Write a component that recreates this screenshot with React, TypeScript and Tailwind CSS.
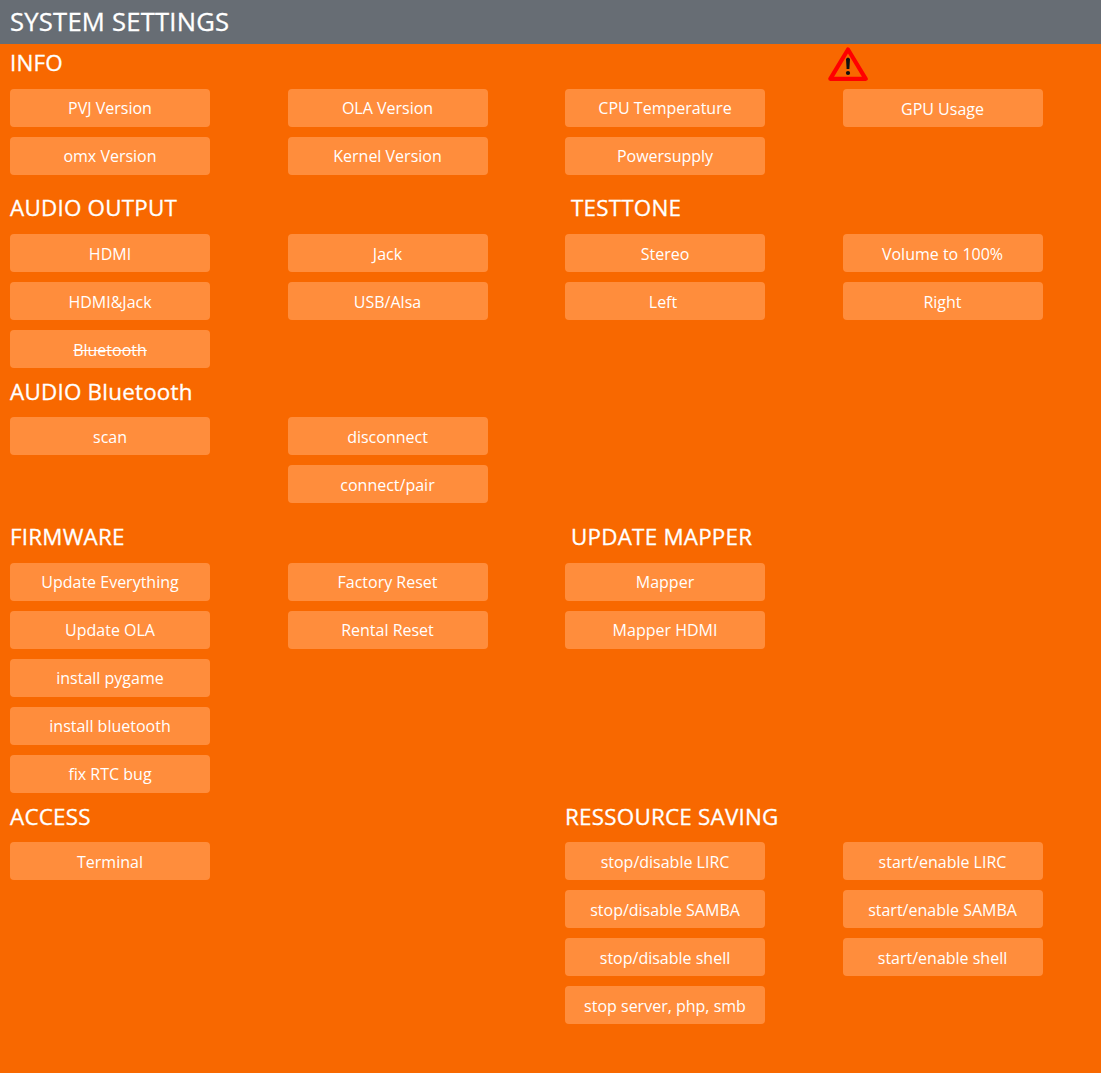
import React from "react";

type Item = string | null;

function Btn({ label, low }: { label: string; low: boolean }) {
  return (
    <button
      className={`flex h-[38px] w-[200px] items-center justify-center rounded-[4px] bg-[#ff8d3c] text-[16px] leading-[24px] text-white ${label === "Bluetooth" ? "line-through" : ""} ${low || label === "GPU Usage" ? "pt-[2px]" : ""} ${label === "Left" ? "pr-[4px]" : ""}`}
    >
      {label}
    </button>
  );
}

function Grid({ items, low = false, className = "" }: { items: Item[]; low?: boolean; className?: string }) {
  return (
    <div className={`grid auto-rows-[38px] grid-cols-[277.5px_277.5px_277.5px_200px] gap-y-[10px] ${className}`}>
      {items.map((it, i) => (it ? <Btn key={i} label={it} low={low} /> : <span key={i} />))}
    </div>
  );
}

function Heads({ left, right, inset = true }: { left: string; right?: string; inset?: boolean }) {
  return (
    <div className="grid h-[38px] grid-cols-[555px_1fr] text-[22.4px] font-medium leading-[37px] tracking-[0.23px] text-white [-webkit-text-stroke:0.3px_white]">
      <h2>{left}</h2>
      {right && <h2 className={inset ? "pl-[6px]" : ""}>{right}</h2>}
    </div>
  );
}

function Warning() {
  return (
    <svg className="absolute left-[818px] top-[3px]" width="40" height="35" viewBox="0 0 40 35">
      <path d="M20 2.5 L37.7 31.8 H2.3 Z" fill="none" stroke="#f00" strokeWidth="4.2" strokeLinejoin="round" />
      <path d="M18 12 Q20 9 22 12 L21.4 22 H18.6 Z" fill="#111" />
      <circle cx="20" cy="26" r="2.1" fill="#111" />
    </svg>
  );
}

export default function App() {
  return (
    <div className="h-[1073px] w-[1101px] overflow-hidden bg-[#f86800] font-['Open_Sans',sans-serif]">
      <header className="h-[44px] bg-[#676d74] pl-[10px] text-[25.6px] font-medium leading-[43px] tracking-[0.23px] text-white [-webkit-text-stroke:0.3px_white]">
        SYSTEM SETTINGS
      </header>
      <main className="pl-[10px]">
        <section className="relative h-[145px]">
          <Heads left="INFO" />
          <Warning />
          <Grid className="mt-[7px]" items={["PVJ Version", "OLA Version", "CPU Temperature", "GPU Usage", "omx Version", "Kernel Version", "Powersupply"]} />
        </section>
        <section className="h-[184px]">
          <Heads left="AUDIO OUTPUT" right="TESTTONE" />
          <Grid low className="mt-[7px]" items={["HDMI", "Jack", "Stereo", "Volume to 100%", "HDMI&Jack", "USB/Alsa", "Left", "Right", "Bluetooth"]} />
        </section>
        <section className="h-[145px]">
          <Heads left="AUDIO Bluetooth" />
          <Grid low className="mt-[6px]" items={["scan", "disconnect", null, null, null, "connect/pair"]} />
        </section>
        <section className="h-[280px]">
          <Heads left="FIRMWARE" right="UPDATE MAPPER" />
          <Grid className="mt-[7px]" items={["Update Everything", "Factory Reset", "Mapper", null, "Update OLA", "Rental Reset", "Mapper HDMI", null, "install pygame", null, null, null, "install bluetooth", null, null, null, "fix RTC bug"]} />
        </section>
        <section>
          <Heads left="ACCESS" right="RESSOURCE SAVING" inset={false} />
          <Grid low className="mt-[6px]" items={["Terminal", null, "stop/disable LIRC", "start/enable LIRC", null, null, "stop/disable SAMBA", "start/enable SAMBA", null, null, "stop/disable shell", "start/enable shell", null, null, "stop server, php, smb"]} />
        </section>
      </main>
    </div>
  );
}
